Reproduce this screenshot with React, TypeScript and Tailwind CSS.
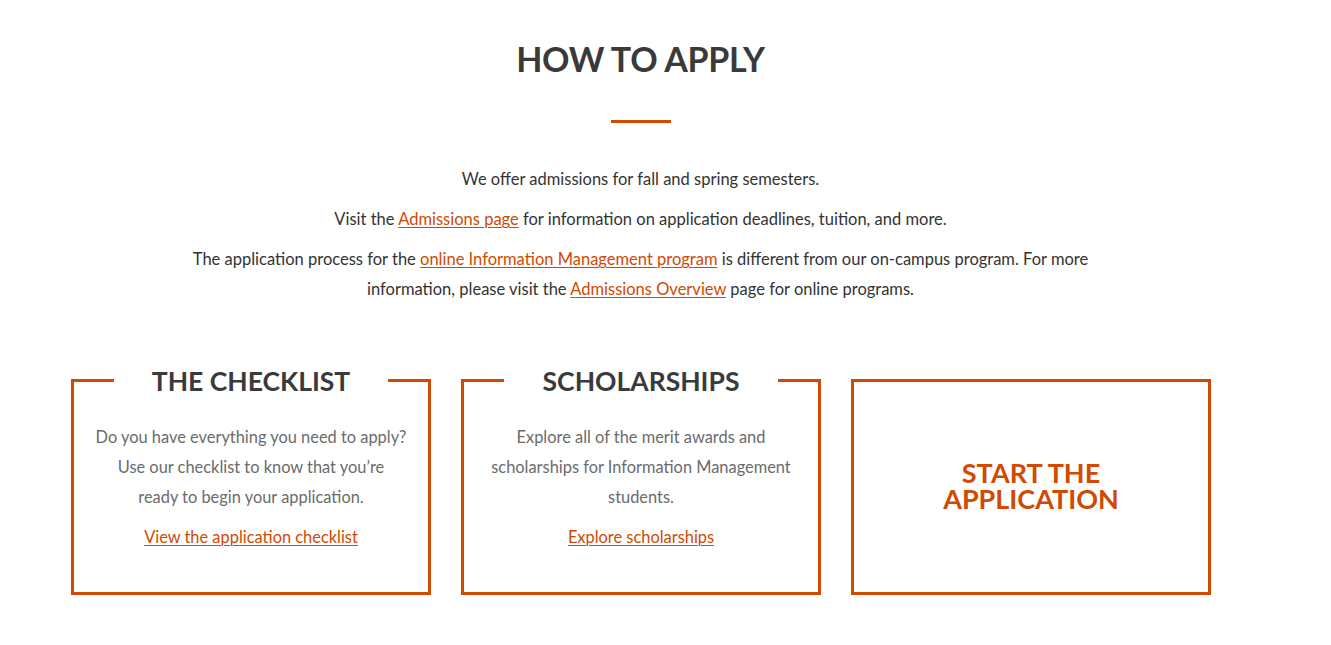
import React from "react";

const orange = "text-[#d04a02]";

type Card = {
  title: string;
  body: React.ReactNode;
  link: string;
};

const cards: Card[] = [
  {
    title: "THE CHECKLIST",
    body: (
      <>
        Do you have everything you need to apply?
        <br />
        Use our checklist to know that you’re
        <br />
        ready to begin your application.
      </>
    ),
    link: "View the application checklist",
  },
  {
    title: "SCHOLARSHIPS",
    body: "Explore all of the merit awards and scholarships for Information Management students.",
    link: "Explore scholarships",
  },
];

const Link = ({ children }: { children: React.ReactNode }) => (
  <a href="#" className={`${orange} underline underline-offset-2 decoration-1`}>
    {children}
  </a>
);

const InfoCard = ({ card }: { card: Card }) => (
  <div className="relative w-[360px] h-[216px] border-[3px] border-[#d04a02] px-[20px] pt-[40px]">
    {/* title sits over the top border */}
    <div className="absolute left-[40px] right-[40px] -top-[18px] bg-white flex justify-center">
      <h3 className="text-[26.5px] leading-[34px] font-bold text-[#3a3a3a]">{card.title}</h3>
    </div>
    <p className="text-[16.4px] leading-[30px] text-[#6b6b6b] text-center">{card.body}</p>
    <p className="mt-[10px] text-[16.4px] leading-[30px] text-center">
      <Link>{card.link}</Link>
    </p>
  </div>
);

export default function App() {
  return (
    <div className="w-[1281px] min-h-[645px] bg-white pt-[38px] font-['Lato','Liberation_Sans',sans-serif] text-[#333]">
      <h1 className="text-center text-[34px] leading-[42px] font-bold text-[#3a3a3a] tracking-[-0.3px]">
        HOW TO APPLY
      </h1>
      <div className="mx-auto mt-[40px] w-[60px] h-[3px] bg-[#d04a02]" />

      <div className="mx-auto mt-[41px] w-[920px] text-center text-[16.5px] leading-[30px]">
        <p>We offer admissions for fall and spring semesters.</p>
        <p className="mt-[10px]">
          Visit the <Link>Admissions page</Link> for information on application deadlines, tuition, and more.
        </p>
        <p className="mt-[10px]">
          The application process for the <Link>online Information Management program</Link> is different from our
          on-campus program. For more information, please visit the <Link>Admissions Overview</Link> page for online
          programs.
        </p>
      </div>

      <div className="flex gap-[30px] pl-[71px] mt-[75px]">
        {cards.map((c) => (
          <InfoCard key={c.title} card={c} />
        ))}
        <div className="w-[360px] h-[216px] border-[3px] border-[#d04a02] flex items-center justify-center pb-[2px]">
          <a href="#" className={`${orange} text-[27px] leading-[26px] font-bold text-center`}>
            START THE
            <br />
            APPLICATION
          </a>
        </div>
      </div>
    </div>
  );
}
